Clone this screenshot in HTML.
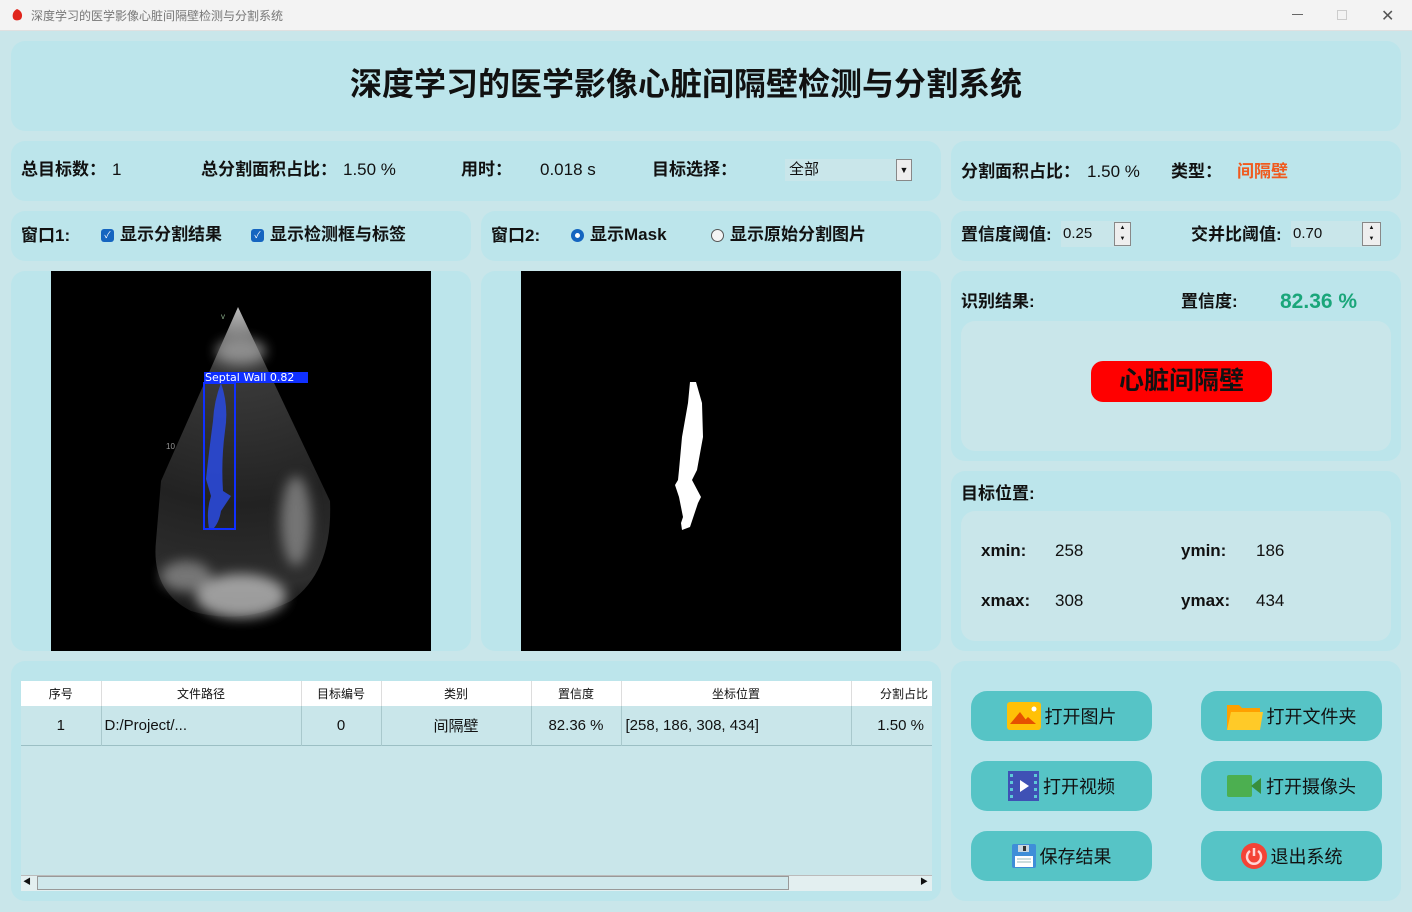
<!DOCTYPE html>
<html><head><meta charset="utf-8"><style>
*{margin:0;padding:0;box-sizing:border-box}
body{width:1412px;height:912px;overflow:hidden;background:#c9e6ea;font-family:"Liberation Sans","Noto Sans CJK SC",sans-serif;position:relative;color:#111}
.a{position:absolute}
.p{position:absolute;background:#bce5eb;border-radius:14px}
.b{font-weight:bold;font-size:17px;line-height:20px;height:20px}
.t{font-size:17px;line-height:20px;height:20px}
.btn{position:absolute;width:181px;height:50px;background:#56c4c6;border-radius:16px;font-size:18px;display:flex;align-items:center;justify-content:center;gap:4px}
table{border-collapse:collapse;font-size:15px}
</style></head><body>
<div class="a" style="left:0;top:0;width:1412px;height:31px;background:#f3f3f3;border-bottom:1px solid #e0e0e0"></div>
<svg class="a" style="left:11px;top:8px" width="12" height="14"><path d="M6 1 C2 3 1 7 2 10 C3 13 8 13 10 11 C12 8 11 4 8 2 Z" fill="#e0241b"/></svg>
<div class="a" style="left:31px;top:7px;font-size:12px;color:#777">深度学习的医学影像心脏间隔壁检测与分割系统</div>
<div class="a" style="left:1292px;top:14px;width:11px;height:1px;background:#666"></div>
<div class="a" style="left:1337px;top:10px;width:10px;height:10px;border:1px solid #ccc"></div>
<div class="a" style="left:1381px;top:6px;font-size:16px;color:#555">✕</div>

<div class="p" style="left:11px;top:41px;width:1390px;height:90px"></div>
<div class="a" style="left:0;width:1372px;top:64px;line-height:40px;text-align:center;font-size:32px;font-weight:bold">深度学习的医学影像心脏间隔壁检测与分割系统</div>

<div class="p" style="left:11px;top:141px;width:930px;height:60px"></div>
<div class="a b" style="left:21px;top:160px">总目标数：</div><div class="a t" style="left:112px;top:160px">1</div>
<div class="a b" style="left:201px;top:160px">总分割面积占比：</div><div class="a t" style="left:343px;top:160px">1.50 %</div>
<div class="a b" style="left:461px;top:160px">用时：</div><div class="a t" style="left:540px;top:160px">0.018 s</div>
<div class="a b" style="left:652px;top:160px">目标选择：</div>
<div class="a" style="left:785px;top:159px;width:127px;height:22px;background:#c9e6ea;font-size:15px;padding:2px 4px;line-height:18px">全部</div>
<div class="a" style="left:896px;top:159px;width:16px;height:22px;background:#eee;border:1px solid #888;font-size:9px;text-align:center;line-height:20px">▼</div>

<div class="p" style="left:951px;top:141px;width:450px;height:60px"></div>
<div class="a b" style="left:961px;top:162px">分割面积占比：</div><div class="a t" style="left:1087px;top:162px">1.50 %</div>
<div class="a b" style="left:1171px;top:162px">类型：</div><div class="a b" style="left:1237px;top:162px;color:#f05a1e">间隔壁</div>

<div class="p" style="left:11px;top:211px;width:460px;height:50px"></div>
<div class="a b" style="left:21px;top:226px">窗口1:</div>
<div class="a" style="left:101px;top:229px;width:13px;height:13px;background:#1565c0;border-radius:3px;color:#fff;font-size:9px;text-align:center;line-height:13px">✓</div>
<div class="a b" style="left:120px;top:225px">显示分割结果</div>
<div class="a" style="left:251px;top:229px;width:13px;height:13px;background:#1565c0;border-radius:3px;color:#fff;font-size:9px;text-align:center;line-height:13px">✓</div>
<div class="a b" style="left:270px;top:225px">显示检测框与标签</div>

<div class="p" style="left:481px;top:211px;width:460px;height:50px"></div>
<div class="a b" style="left:491px;top:226px">窗口2:</div>
<div class="a" style="left:571px;top:229px;width:13px;height:13px;border:4px solid #1565c0;border-radius:50%;background:#fff"></div>
<div class="a b" style="left:590px;top:225px">显示Mask</div>
<div class="a" style="left:711px;top:229px;width:13px;height:13px;border:1px solid #555;border-radius:50%;background:#f4f4f4"></div>
<div class="a b" style="left:730px;top:225px">显示原始分割图片</div>

<div class="p" style="left:951px;top:211px;width:450px;height:50px"></div>
<div class="a b" style="left:961px;top:225px">置信度阈值:</div>
<div class="a" style="left:1061px;top:221px;width:70px;height:26px;background:#c9e6ea;font-size:15px;padding:4px 2px;line-height:18px">0.25</div>
<div class="a" style="left:1114px;top:222px;width:17px;height:24px;background:#eee;border:1px solid #888;font-size:6px;text-align:center;line-height:11px">▲<br>▼</div>
<div class="a b" style="left:1191px;top:225px">交并比阈值:</div>
<div class="a" style="left:1291px;top:221px;width:90px;height:26px;background:#c9e6ea;font-size:15px;padding:4px 2px;line-height:18px">0.70</div>
<div class="a" style="left:1362px;top:222px;width:19px;height:24px;background:#eee;border:1px solid #888;font-size:6px;text-align:center;line-height:11px">▲<br>▼</div>

<div class="p" style="left:11px;top:271px;width:460px;height:380px"></div>
<svg class="a" style="left:51px;top:271px" width="380" height="380">
<defs><radialGradient id="g" cx="187" cy="36" r="330" gradientUnits="userSpaceOnUse"><stop offset="0" stop-color="#bbb"/><stop offset="0.1" stop-color="#777"/><stop offset="0.2" stop-color="#3a3a3a"/><stop offset="0.6" stop-color="#222"/><stop offset="0.85" stop-color="#2e2e2e"/><stop offset="1" stop-color="#000"/></radialGradient>
<filter id="bl"><feGaussianBlur stdDeviation="6"/></filter></defs>
<rect width="380" height="380" fill="#000"/>
<path d="M187 36 L279 230 Q282 300 240 330 Q190 355 140 340 Q100 320 105 270 L110 210 Z" fill="url(#g)"/>
<g filter="url(#bl)" opacity="0.8"><ellipse cx="190" cy="325" rx="45" ry="22" fill="#bbb"/><ellipse cx="135" cy="305" rx="25" ry="15" fill="#888"/><ellipse cx="245" cy="250" rx="15" ry="45" fill="#888"/><ellipse cx="190" cy="80" rx="25" ry="12" fill="#999"/></g>
<path d="M170 112 Q178 135 174 160 Q170 190 172 220 L180 225 L170 240 Q168 252 162 258 L158 258 Q155 240 160 225 L155 208 Q158 180 162 150 Q163 130 170 112 Z" fill="#2a49d8" opacity="0.9"/>
<rect x="153" y="112" width="31" height="146" fill="none" stroke="#1030ff" stroke-width="2"/>
<rect x="153" y="101" width="104" height="11" fill="#1030ff"/>
<text x="154" y="110" font-family="DejaVu Sans" font-size="11" fill="#fff">Septal Wall 0.82</text>
<text x="170" y="48" font-size="8" fill="#8a8">v</text><text x="115" y="178" font-size="8" fill="#999">10</text>
</svg>

<div class="p" style="left:481px;top:271px;width:460px;height:380px"></div>
<svg class="a" style="left:521px;top:271px" width="380" height="380">
<rect width="380" height="380" fill="#000"/>
<path d="M169 111 L175 111 L181 132 L182 166 L176 199 L171 209 L180 226 L177 232 L169 256 L161 259 L160 252 L162 246 L158 226 L154 214 L157 209 L158 199 L161 166 L167 132 Z" fill="#fff"/>
</svg>

<div class="p" style="left:951px;top:271px;width:450px;height:190px"></div>
<div class="a b" style="left:961px;top:292px">识别结果:</div>
<div class="a b" style="left:1181px;top:292px">置信度:</div>
<div class="a" style="left:1280px;top:290px;font-size:21px;line-height:24px;font-weight:bold;color:#1aa67a">82.36 %</div>
<div class="a" style="left:961px;top:321px;width:430px;height:130px;background:#c9e6ea;border-radius:14px"></div>
<div class="a" style="left:1091px;top:361px;width:181px;height:41px;background:#f00;border-radius:12px;font-size:25px;font-weight:bold;text-align:center;line-height:41px">心脏间隔壁</div>

<div class="p" style="left:951px;top:471px;width:450px;height:180px"></div>
<div class="a b" style="left:961px;top:484px">目标位置:</div>
<div class="a" style="left:961px;top:511px;width:430px;height:130px;background:#c9e6ea;border-radius:14px"></div>
<div class="a b" style="left:981px;top:541px">xmin:</div><div class="a t" style="left:1055px;top:541px">258</div>
<div class="a b" style="left:1181px;top:541px">ymin:</div><div class="a t" style="left:1256px;top:541px">186</div>
<div class="a b" style="left:981px;top:591px">xmax:</div><div class="a t" style="left:1055px;top:591px">308</div>
<div class="a b" style="left:1181px;top:591px">ymax:</div><div class="a t" style="left:1256px;top:591px">434</div>

<div class="p" style="left:11px;top:661px;width:930px;height:240px"></div>
<div class="a" style="left:21px;top:681px;width:911px;height:210px;background:#c9e6ea;overflow:hidden">
<table>
<tr style="background:#fff;height:25px;font-size:12px;text-align:center"><td style="width:80px;border-right:1px solid #ddd">序号</td><td style="width:200px;border-right:1px solid #ddd">文件路径</td><td style="width:80px;border-right:1px solid #ddd">目标编号</td><td style="width:150px;border-right:1px solid #ddd">类别</td><td style="width:90px;border-right:1px solid #ddd">置信度</td><td style="width:230px;border-right:1px solid #ddd">坐标位置</td><td style="width:81px;text-align:right;padding-right:4px">分割占比</td></tr>
<tr style="height:39px;border-bottom:1px solid #9bbfc4;text-align:center"><td style="border-right:1px solid #a8c8cc">1</td><td style="text-align:left;padding-left:3px;border-right:1px solid #a8c8cc">D:/Project/...</td><td style="border-right:1px solid #a8c8cc">0</td><td style="border-right:1px solid #a8c8cc">间隔壁</td><td style="border-right:1px solid #a8c8cc">82.36 %</td><td style="text-align:left;padding-left:4px;border-right:1px solid #a8c8cc">[258, 186, 308, 434]</td><td style="text-align:right;padding-right:8px">1.50 %</td></tr>
</table>
<div class="a" style="left:0;top:194px;width:911px;height:16px;background:#e3eff0;border-top:1px solid #bbb"></div>
<div class="a" style="left:16px;top:195px;width:752px;height:14px;background:#cfe8ec;border:1px solid #999"></div>
<div class="a" style="left:2px;top:195px;font-size:8px">◀</div><div class="a" style="left:899px;top:195px;font-size:8px">▶</div>
</div>

<div class="p" style="left:951px;top:661px;width:450px;height:240px"></div>
<div class="btn" style="left:971px;top:691px"><svg width="34" height="28"><rect width="34" height="28" rx="3" fill="#ffc107"/><path d="M3 22 L13 10 L22 22 Z" fill="#e65100"/><path d="M14 22 L21 15 L29 22 Z" fill="#e65100"/><circle cx="27" cy="7" r="2.5" fill="#fff"/></svg>打开图片</div>
<div class="btn" style="left:1201px;top:691px"><svg width="36" height="28"><path d="M0 3 h12 l3 3 h18 v22 h-33 Z" fill="#ffa000"/><path d="M4 10 h32 l-3 18 h-33 Z" fill="#ffca28"/></svg>打开文件夹</div>
<div class="btn" style="left:971px;top:761px"><svg width="31" height="30"><rect width="31" height="30" fill="#3f51b5"/><g fill="#5ec8d8"><rect x="2" y="3" width="3" height="3"/><rect x="2" y="10" width="3" height="3"/><rect x="2" y="17" width="3" height="3"/><rect x="2" y="24" width="3" height="3"/><rect x="26" y="3" width="3" height="3"/><rect x="26" y="10" width="3" height="3"/><rect x="26" y="17" width="3" height="3"/><rect x="26" y="24" width="3" height="3"/></g><path d="M12 9 L21 15 L12 21 Z" fill="#fff"/></svg>打开视频</div>
<div class="btn" style="left:1201px;top:761px"><svg width="35" height="22"><rect width="25" height="22" rx="2" fill="#4caf50"/><path d="M24 11 L34 3 V19 Z" fill="#388e3c"/></svg>打开摄像头</div>
<div class="btn" style="left:971px;top:831px"><svg width="24" height="24"><rect width="24" height="24" rx="2" fill="#3f8ed8"/><rect x="6" y="1" width="11" height="7" fill="#c8d6e0"/><rect x="11" y="2" width="3" height="5" fill="#333"/><rect x="3" y="12" width="18" height="11" fill="#fff"/><g stroke="#9bb" stroke-width="1"><line x1="5" y1="15" x2="19" y2="15"/><line x1="5" y1="18" x2="19" y2="18"/></g></svg>保存结果</div>
<div class="btn" style="left:1201px;top:831px"><svg width="26" height="26"><circle cx="13" cy="13" r="13" fill="#f44336"/><path d="M9 8 A7 7 0 1 0 17 8" fill="none" stroke="#ffd6d6" stroke-width="2.5"/><line x1="13" y1="5" x2="13" y2="13" stroke="#ffd6d6" stroke-width="2.5"/></svg>退出系统</div>
</body></html>
